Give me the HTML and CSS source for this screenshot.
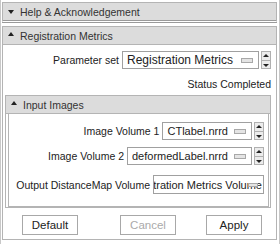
FILE: index.html
```html
<!DOCTYPE html>
<html lang="en">
<head>
    <meta charset="UTF-8">
    <title>Registration Metrics</title>
    <link rel="stylesheet" href="styles.css">
</head>
<body>
    <div class="panel">
        <div class="section collapsed">
            <div class="section-head"><span class="arrow down"></span>Help &amp; Acknowledgement</div>
        </div>

        <div class="section main">
            <div class="section-head"><span class="arrow up"></span>Registration Metrics</div>
            <div class="section-body">
                <div class="row param-row">
                    <span class="label">Parameter set</span>
                    <div class="combo big"><span class="combo-text">Registration Metrics</span><span class="menu-ind"></span></div>
                    <div class="spin"><span class="spin-up"></span><span class="spin-down"></span></div>
                </div>
                <div class="status">Status Completed</div>

                <div class="section inner">
                    <div class="section-head"><span class="arrow up"></span>Input Images</div>
                    <div class="section-body">
                        <div class="row vol-row">
                            <span class="label">Image Volume 1</span>
                            <div class="combo"><span class="combo-text">CTlabel.nrrd</span><span class="menu-ind"></span></div>
                            <div class="spin"><span class="spin-up"></span><span class="spin-down"></span></div>
                        </div>
                        <div class="row vol-row">
                            <span class="label">Image Volume 2</span>
                            <div class="combo"><span class="combo-text">deformedLabel.nrrd</span><span class="menu-ind"></span></div>
                            <div class="spin"><span class="spin-up"></span><span class="spin-down"></span></div>
                        </div>
                        <div class="row out-row">
                            <span class="label">Output DistanceMap Volume</span>
                            <div class="entry">
                                <span class="entry-text">Registration Metrics Volume</span>
                                <span class="entry-ind"></span>
                            </div>
                        </div>
                    </div>
                </div>

                <div class="buttons">
                    <button class="btn btn-default">Default</button>
                    <button class="btn btn-cancel" disabled>Cancel</button>
                    <button class="btn btn-apply">Apply</button>
                </div>
            </div>
        </div>
    </div>
</body>
</html>
```

FILE: styles.css
```css
body {
    margin: 0;
    background-color: #ffffff;
    font-family: "Liberation Sans", Arial, sans-serif;
    font-size: 10.5px;
    color: #222;
}
.panel {
    width: 280px;
    height: 244px;
    box-sizing: border-box;
    border-left: 1px solid #c8c8c8;
    border-right: 1px solid #c8c8c8;
    padding: 2px 2px 0 1px;
}
.section {
    border: 1px solid #b4b4b4;
    background-color: #ffffff;
}
.section-head {
    height: 17px;
    background-color: #dcdcdc;
    display: flex;
    align-items: center;
    padding-left: 5px;
    color: #333;
}
.arrow {
    width: 0;
    height: 0;
    border-left: 3px solid transparent;
    border-right: 3px solid transparent;
    margin-right: 6px;
}
.arrow.down {
    border-top: 4px solid #222;
}
.arrow.up {
    border-bottom: 4px solid #222;
    margin-top: -3px;
}
.collapsed {
    border-bottom: 3px double #9a9a9a;
}
.main {
    margin-top: 3px;
    height: 212px;
}
.main > .section-head {
    border-bottom: 1px solid #b4b4b4;
}
.main > .section-body {
    padding: 6px 5px 0 0;
}
.row {
    display: flex;
    align-items: center;
    justify-content: flex-end;
}
.label {
    margin-right: 3px;
}
.combo {
    height: 18px;
    box-sizing: border-box;
    border: 1px solid #a0a0a0;
    background-color: #fff;
    display: flex;
    align-items: center;
    padding: 0 5px 0 4px;
    font-size: 11px;
    white-space: nowrap;
}
.combo.big {
    width: 137px;
    font-size: 12px;
}
.combo-text {
    flex: 1;
}
.menu-ind {
    width: 10px;
    height: 3px;
    border: 1px solid #a8a8a8;
    background-color: #e4e4e4;
    margin-left: 6px;
    flex-shrink: 0;
}
.spin {
    width: 10px;
    height: 18px;
    margin-left: 2px;
    display: flex;
    flex-direction: column;
    border: 1px solid #b0b0b0;
    box-sizing: border-box;
}
.spin-up, .spin-down {
    flex: 1;
    background-color: #ececec;
    position: relative;
}
.spin-up {
    border-bottom: 1px solid #b0b0b0;
}
.spin-up::after, .spin-down::after {
    content: "";
    position: absolute;
    left: 1px;
    top: 2px;
    border-left: 3px solid transparent;
    border-right: 3px solid transparent;
}
.spin-up::after {
    border-bottom: 3px solid #222;
}
.spin-down::after {
    border-top: 3px solid #222;
    top: 3px;
}
.status {
    text-align: right;
    margin-top: 9px;
    font-size: 10.5px;
}
.inner {
    margin: 5px 0 0 2px;
}
.inner > .section-head {
    border-bottom: 1px solid #b4b4b4;
}
.inner > .section-body {
    margin: 0 1px 0 2px;
    border: 1px solid #b4b4b4;
    border-top: none;
    padding: 8px 4px 12px 0;
}
.vol-row + .vol-row {
    margin-top: 7px;
}
.out-row {
    margin-top: 10px;
}
.entry {
    width: 111px;
    height: 19px;
    box-sizing: border-box;
    border: 1px solid #a0a0a0;
    overflow: hidden;
    display: flex;
    align-items: center;
    justify-content: flex-end;
    padding-right: 1px;
    font-size: 11px;
    white-space: nowrap;
    position: relative;
}
.entry-text {
    flex-shrink: 0;
}
.entry-ind {
    position: absolute;
    right: 5px;
    top: 7px;
    width: 8px;
    height: 2px;
    border: 1px solid #a8a8a8;
    background-color: #e4e4e4;
}
.buttons {
    display: flex;
    margin-top: 7px;
}
.btn {
    width: 56px;
    height: 20px;
    font-family: "Liberation Sans", Arial, sans-serif;
    font-size: 11.5px;
    color: #222;
    background-color: #fff;
    border: 1px solid #a8a8a8;
    padding: 0;
}
.btn-default {
    margin-left: 19px;
}
.btn-cancel {
    margin-left: 42px;
    color: #aaa;
}
.btn-apply {
    margin-left: 30px;
}
```
